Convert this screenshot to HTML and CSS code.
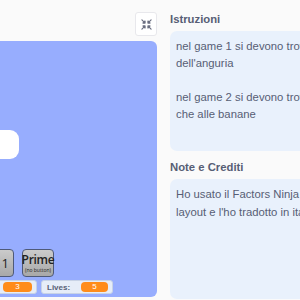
FILE: index.html
```html
<!DOCTYPE html>
<html lang="it">
<head>
<meta charset="utf-8">
<link rel="stylesheet" href="styles.css">
</head>
<body>
<div class="page">
  <div class="left">
    <div class="stage-bar">
      <button class="fs-btn" aria-label="Schermo intero">
        <svg width="11" height="11" viewBox="0 0 12 12">
          <g fill="#6a6e80" stroke="#6a6e80" stroke-width="1.3" stroke-linecap="round" stroke-linejoin="round">
            <path d="M1 1 L3.4 3.4" fill="none"/>
            <path d="M4.4 4.4 L4.4 2.2 L2.2 4.4 Z"/>
            <path d="M11 1 L8.6 3.4" fill="none"/>
            <path d="M7.6 4.4 L7.6 2.2 L9.8 4.4 Z"/>
            <path d="M1 11 L3.4 8.6" fill="none"/>
            <path d="M4.4 7.6 L4.4 9.8 L2.2 7.6 Z"/>
            <path d="M11 11 L8.6 8.6" fill="none"/>
            <path d="M7.6 7.6 L7.6 9.8 L9.8 7.6 Z"/>
          </g>
        </svg>
      </button>
    </div>
    <div class="stage">
      <div class="sprite-blob"></div>
      <div class="game-btn btn-one">1</div>
      <div class="game-btn btn-prime"><span class="prime-big">Prime</span><span class="prime-small">(no button)</span></div>
      <div class="monitor mon-score"><span class="pill">3</span></div>
      <div class="monitor mon-lives"><span class="mon-label">Lives:</span><span class="pill">5</span></div>
    </div>
  </div>
  <div class="right">
    <h2 class="title title-first">Istruzioni</h2>
    <div class="box box-instr">nel game 1 si devono trovare i numeri primi nei semi<br>dell'anguria<br><br>nel game 2 si devono trovare i numeri primi sia nei semi<br>che alle banane</div>
    <h2 class="title">Note e Crediti</h2>
    <div class="box box-notes">Ho usato il Factors Ninja come base per il<br>layout e l'ho tradotto in italiano</div>
  </div>
</div>
</body>
</html>
```
FILE: styles.css
```css
html, body {
  margin: 0;
  padding: 0;
  background: #fafafa;
  overflow: hidden;
}
.page {
  display: flex;
  gap: 13px;
  width: 300px;
  height: 300px;
  overflow: hidden;
  font-family: "Liberation Sans", Arial, sans-serif;
  color: #575e75;
}
.left {
  flex: 0 0 157px;
  display: flex;
  flex-direction: column;
}
.stage-bar {
  flex-shrink: 0;
  display: flex;
  justify-content: flex-end;
  padding-top: 12px;
  height: 24px;
  margin-bottom: 5px;
}
.fs-btn {
  width: 22px;
  height: 24px;
  padding: 0;
  margin: 0;
  border: 1px solid #e8e8ec;
  border-radius: 3px;
  background: #ffffff;
  display: flex;
  align-items: center;
  justify-content: center;
}
.stage {
  flex-shrink: 0;
  position: relative;
  height: 256px;
  background: #97adfe;
  border-radius: 0 6px 6px 0;
  overflow: hidden;
}
.sprite-blob {
  position: absolute;
  left: -20px;
  top: 89px;
  width: 39px;
  height: 29px;
  background: #ffffff;
  border-radius: 9px;
}
.game-btn {
  position: absolute;
  top: 208px;
  height: 28px;
  box-sizing: border-box;
  border: 1.5px solid #4f5a78;
  border-radius: 4px;
  background: linear-gradient(#cbcbcb, #a8a8a8);
  color: #222;
  font-family: "Open Sans", "DejaVu Sans", sans-serif;
  display: flex;
  flex-direction: column;
  align-items: center;
  justify-content: center;
}
.btn-one {
  left: -18px;
  width: 32px;
  font-size: 13px;
  align-items: flex-end;
  padding-right: 4px;
}
.btn-prime {
  left: 22px;
  width: 32px;
}
.prime-big {
  font-size: 12px;
  line-height: 12px;
  font-weight: 600;
  letter-spacing: -0.3px;
}
.prime-small {
  font-size: 5px;
  line-height: 6px;
  margin-top: 1px;
  white-space: nowrap;
}
.monitor {
  position: absolute;
  top: 239px;
  height: 14px;
  box-sizing: border-box;
  background: #e6edf8;
  border: 1px solid #c8d3e6;
  border-radius: 3px;
  display: flex;
  align-items: center;
  padding: 0 4px;
  gap: 8px;
  font-size: 8px;
  color: #575e75;
}
.mon-score {
  left: -8px;
  width: 45px;
  padding-left: 10px;
}
.mon-lives {
  left: 41px;
  width: 72px;
  padding-left: 5px;
}
.mon-label {
  font-weight: bold;
  width: 28px;
}
.pill {
  display: inline-block;
  width: 29px;
  height: 10px;
  line-height: 10px;
  border-radius: 4px;
  background: #ff8c1a;
  color: #ffffff;
  text-align: center;
  font-size: 8px;
}
.right {
  flex: 0 0 auto;
  width: 400px;
  display: flex;
  flex-direction: column;
}
.title {
  flex-shrink: 0;
  margin: 9px 0 5px;
  font-size: 11.3px;
  line-height: 14px;
  font-weight: bold;
  color: #575e75;
}
.title-first {
  margin-top: 12px;
}
.box {
  flex-shrink: 0;
  background: #e9f1fc;
  border-radius: 7px;
  padding: 7px 6px;
  font-size: 11.3px;
  line-height: 17px;
  white-space: nowrap;
  color: #575e75;
  box-sizing: border-box;
}
.box-instr {
  height: 120px;
}
.box-notes {
  height: 120px;
  padding-top: 6px;
  line-height: 18px;
}
```
